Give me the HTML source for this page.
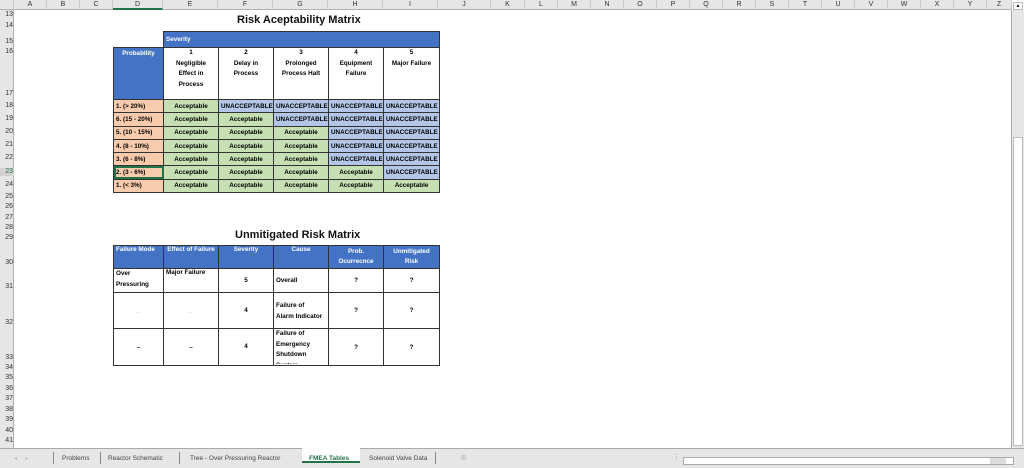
<!DOCTYPE html>
<html><head><meta charset="utf-8"><style>
*{margin:0;padding:0;box-sizing:border-box}
body{width:1024px;height:468px;overflow:hidden;background:#fff;font-family:"Liberation Sans",sans-serif;position:relative}
.a{position:absolute}
.colh{position:absolute;top:0;height:10px;background:#e6e6e6;border-right:1px solid #c8c8c8;border-bottom:1px solid #b0b0b0;font-size:7px;color:#333;text-align:center;line-height:10px}
.rl{position:absolute;left:0;width:14px;font-size:7px;color:#333;text-align:right;padding-right:1px;line-height:8px}
table{border-collapse:collapse;position:absolute;font-size:6.3px;font-weight:bold;table-layout:fixed}
td{border:1px solid #333;padding:0 2px;overflow:hidden;white-space:nowrap;text-align:center}
.b{background:#4472c4;color:#fff}
.o{background:#f8cbad;text-align:left}
.g{background:#c6e0b4}
.u{background:#b4c6e7}
.ttl{position:absolute;font-weight:bold;font-size:11px;color:#111}
.h{overflow:hidden;display:flex;align-items:center;justify-content:center}
</style></head><body>
<div class="colh" style="left:0;width:14px"></div>
<div class="colh" style="left:14px;width:33px">A</div>
<div class="colh" style="left:47px;width:33px">B</div>
<div class="colh" style="left:80px;width:33px">C</div>
<div class="colh" style="left:113px;width:50px;border-bottom:2px solid #217346">D</div>
<div class="colh" style="left:163px;width:55px">E</div>
<div class="colh" style="left:218px;width:55px">F</div>
<div class="colh" style="left:273px;width:55px">G</div>
<div class="colh" style="left:328px;width:55px">H</div>
<div class="colh" style="left:383px;width:55px">I</div>
<div class="colh" style="left:438px;width:53px">J</div>
<div class="colh" style="left:491px;width:34px">K</div>
<div class="colh" style="left:525px;width:33px">L</div>
<div class="colh" style="left:558px;width:33px">M</div>
<div class="colh" style="left:591px;width:33px">N</div>
<div class="colh" style="left:624px;width:33px">O</div>
<div class="colh" style="left:657px;width:33px">P</div>
<div class="colh" style="left:690px;width:33px">Q</div>
<div class="colh" style="left:723px;width:33px">R</div>
<div class="colh" style="left:756px;width:33px">S</div>
<div class="colh" style="left:789px;width:33px">T</div>
<div class="colh" style="left:822px;width:33px">U</div>
<div class="colh" style="left:855px;width:33px">V</div>
<div class="colh" style="left:888px;width:33px">W</div>
<div class="colh" style="left:921px;width:33px">X</div>
<div class="colh" style="left:954px;width:33px">Y</div>
<div class="colh" style="left:987px;width:25px">Z</div>
<div class="a" style="left:0;top:10px;width:14px;height:438px;background:#e6e6e6;border-right:1px solid #b0b0b0"></div>
<div class="rl" style="top:11px">13</div><div class="rl" style="top:22px">14</div><div class="rl" style="top:38px">15</div><div class="rl" style="top:48px">16</div><div class="rl" style="top:90px">17</div><div class="rl" style="top:102px">18</div><div class="rl" style="top:115px">19</div><div class="rl" style="top:128px">20</div><div class="rl" style="top:141px">21</div><div class="rl" style="top:154px">22</div><div class="rl" style="top:168px;background:#d2d2d2;color:#217346">23</div><div class="rl" style="top:181px">24</div><div class="rl" style="top:193px">25</div><div class="rl" style="top:203px">26</div><div class="rl" style="top:214px">27</div><div class="rl" style="top:224px">28</div><div class="rl" style="top:234px">29</div><div class="rl" style="top:259px">30</div><div class="rl" style="top:283px">31</div><div class="rl" style="top:319px">32</div><div class="rl" style="top:354px">33</div><div class="rl" style="top:364px">34</div><div class="rl" style="top:374px">35</div><div class="rl" style="top:385px">36</div><div class="rl" style="top:395px">37</div><div class="rl" style="top:406px">38</div><div class="rl" style="top:416px">39</div><div class="rl" style="top:427px">40</div><div class="rl" style="top:437px">41</div>

<div class="ttl" style="left:237px;top:14px">Risk Aceptability Matrix</div>
<table style="left:113px;top:31px;width:326px">
<colgroup><col style="width:50px"><col style="width:55px"><col style="width:55px"><col style="width:55px"><col style="width:55px"><col style="width:56px"></colgroup>
<tr style="height:16px"><td style="border:none;background:#fff"></td><td colspan="5" class="b" style="text-align:left">Severity</td></tr>
<tr style="height:52px"><td class="b" style="vertical-align:top;padding-top:2px">Probability</td>
<td style="vertical-align:top;white-space:normal;line-height:10.5px;padding:0 9px">1<br>Negligible Effect in Process</td>
<td style="vertical-align:top;white-space:normal;line-height:10.5px;padding:0 9px">2<br>Delay in Process</td>
<td style="vertical-align:top;white-space:normal;line-height:10.5px;padding:0 6px">3<br>Prolonged Process Halt</td>
<td style="vertical-align:top;white-space:normal;line-height:10.5px;padding:0 6px">4<br>Equipment Failure</td>
<td style="vertical-align:top;white-space:normal;line-height:10.5px">5<br>Major Failure</td></tr>
<tr style="height:13.3px"><td class="o">1. (&gt; 20%)</td><td class="g">Acceptable</td><td class="u">UNACCEPTABLE</td><td class="u">UNACCEPTABLE</td><td class="u">UNACCEPTABLE</td><td class="u">UNACCEPTABLE</td></tr>
<tr style="height:13.3px"><td class="o">6. (15 - 20%)</td><td class="g">Acceptable</td><td class="g">Acceptable</td><td class="u">UNACCEPTABLE</td><td class="u">UNACCEPTABLE</td><td class="u">UNACCEPTABLE</td></tr>
<tr style="height:13.3px"><td class="o">5. (10 - 15%)</td><td class="g">Acceptable</td><td class="g">Acceptable</td><td class="g">Acceptable</td><td class="u">UNACCEPTABLE</td><td class="u">UNACCEPTABLE</td></tr>
<tr style="height:13.3px"><td class="o">4. (8 - 10%)</td><td class="g">Acceptable</td><td class="g">Acceptable</td><td class="g">Acceptable</td><td class="u">UNACCEPTABLE</td><td class="u">UNACCEPTABLE</td></tr>
<tr style="height:13.3px"><td class="o">3. (6 - 8%)</td><td class="g">Acceptable</td><td class="g">Acceptable</td><td class="g">Acceptable</td><td class="u">UNACCEPTABLE</td><td class="u">UNACCEPTABLE</td></tr>
<tr style="height:13.3px"><td class="o" style="outline:2px solid #217346;outline-offset:-2px">2. (3 - 6%)</td><td class="g">Acceptable</td><td class="g">Acceptable</td><td class="g">Acceptable</td><td class="g">Acceptable</td><td class="u">UNACCEPTABLE</td></tr>
<tr style="height:13.3px"><td class="o">1. (&lt; 3%)</td><td class="g">Acceptable</td><td class="g">Acceptable</td><td class="g">Acceptable</td><td class="g">Acceptable</td><td class="g">Acceptable</td></tr>
</table>

<div class="ttl" style="left:235px;top:229px">Unmitigated Risk Matrix</div>
<table style="left:113px;top:245px;width:326px">
<colgroup><col style="width:50px"><col style="width:55px"><col style="width:55px"><col style="width:55px"><col style="width:55px"><col style="width:56px"></colgroup>
<tr style="height:23px"><td class="b" style="vertical-align:top;text-align:left">Failure Mode</td><td class="b" style="vertical-align:top">Effect of Failure</td><td class="b" style="vertical-align:top">Severity</td><td class="b" style="vertical-align:top">Cause</td><td class="b" style="line-height:10.5px">Prob.<br>Ocurrecnce</td><td class="b" style="line-height:10.5px">Unmitigated<br>Risk</td></tr>
<tr style="height:24px"><td style="text-align:left;vertical-align:top;line-height:10.5px">Over<br>Pressuring</td><td style="text-align:left;vertical-align:top">Major Failure</td><td>5</td><td style="text-align:left">Overall</td><td>?</td><td>?</td></tr>
<tr style="height:36px"><td style="color:#aaa">_</td><td style="color:#aaa">_</td><td>4</td><td style="text-align:left;line-height:11px">Failure of<br>Alarm Indicator</td><td>?</td><td>?</td></tr>
<tr style="height:37px"><td>–</td><td>–</td><td style="vertical-align:top;padding-top:14px">4</td><td style="text-align:left;vertical-align:top;padding-top:0"><div style="height:35px;overflow:hidden;line-height:10.5px">Failure of<br>Emergency<br>Shutdown<br>System</div></td><td>?</td><td>?</td></tr>
</table>

<div class="a" style="left:1011px;top:10px;width:13px;height:438px;background:#e6e6e6;border-left:1px solid #aaa"></div>
<div class="a" style="left:1013px;top:137px;width:10px;height:309px;background:#fff;border:1px solid #bbb"></div>
<div class="a" style="left:1013px;top:2px;width:10px;height:8px;background:#fff;border:1px solid #bbb;font-size:5px;text-align:center;line-height:6px">▲</div>
<div class="a" style="left:0;top:448px;width:1024px;height:20px;background:#e6e6e6;border-top:1px solid #aaa;font-size:6.5px;color:#444"></div>
<div class="a" style="left:14px;top:455px;font-size:6px;color:#bbb">◂ &nbsp;&nbsp;&nbsp; ▸</div>
<div class="a" style="left:53px;top:452px;height:12px;border-left:1px solid #888"></div>
<div class="a" style="left:62px;top:455px;font-size:6.5px;color:#444">Problems</div>
<div class="a" style="left:100px;top:452px;height:12px;border-left:1px solid #888"></div>
<div class="a" style="left:108px;top:455px;font-size:6.5px;color:#444">Reactor Schematic</div>
<div class="a" style="left:179px;top:452px;height:12px;border-left:1px solid #888"></div>
<div class="a" style="left:190px;top:455px;font-size:6.5px;color:#444">Tree - Over Pressuring Reactor</div>
<div class="a" style="left:302px;top:448px;width:58px;height:15px;background:#fff;border-bottom:2px solid #217346"></div>
<div class="a" style="left:309px;top:455px;font-size:6.5px;color:#217346;font-weight:bold">FMEA Tables</div>
<div class="a" style="left:369px;top:455px;font-size:6.5px;color:#444">Solenoid Valve Data</div>
<div class="a" style="left:435px;top:452px;height:12px;border-left:1px solid #888"></div>
<div class="a" style="left:460px;top:453px;font-size:8px;color:#bbb">⊕</div>
<div class="a" style="left:673px;top:453px;font-size:7px;color:#999">⋮</div>
<div class="a" style="left:683px;top:457px;width:331px;height:8px;background:#fff;border:1px solid #aaa"></div>
<div class="a" style="left:990px;top:458px;width:16px;height:6px;background:#ddd"></div>
</body></html>
